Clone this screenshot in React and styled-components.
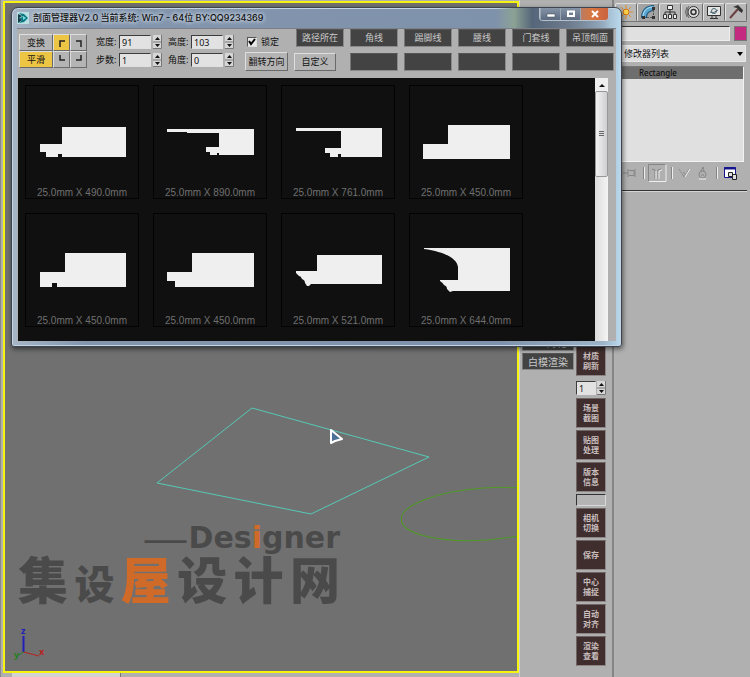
import React, { useState } from "react";
import styled, { createGlobalStyle, css } from "styled-components";

const GlobalStyle = createGlobalStyle`
  * {
    box-sizing: border-box;
  }
  body {
    margin: 0;
    background: #b0b0b0;
    color: #111;
    font-family: "Noto Sans", "Noto Sans CJK SC", sans-serif;
    font-size: 9px;
    line-height: 12px;
  }
  button, input, select {
    margin: 0;
    padding: 0;
    border-radius: 0;
    font: inherit;
    color: inherit;
  }
`;

const Workspace = styled.div`
  position: relative;
  display: grid;
  grid-template-columns: minmax(0, 1fr) 93px 138px;
  min-height: 100vh;
  overflow: hidden;
`;

/* ---------- viewport ---------- */

const ViewportColumn = styled.main`
  display: flex;
  flex-direction: column;
  padding: 1px 0 0 2px;
  border-left: 1px solid #8a8a8a;
`;

const Viewport = styled.section`
  position: relative;
  flex: 1;
  overflow: hidden;
  background: #707070;
  border: 2px solid #f7f310;
`;

const StatusStrip = styled.div`
  width: 118px;
  height: 4px;
  background: #d2d2d2;
  border-left: 9px solid #b0b0b0;
  border-right: 1px solid #777;
`;

const Scene = styled.svg`
  position: absolute;
  top: 0;
  left: 0;
  width: 514px;
  height: 100%;
`;

const Watermark = styled.div`
  position: absolute;
  left: 13px;
  bottom: 64px;
  width: 322px;
  color: #4a4a4a;
  font-weight: 900;
  white-space: nowrap;
`;

const WatermarkTop = styled.div`
  display: flex;
  align-items: center;
  justify-content: flex-end;
  gap: 2px;
  line-height: 28px;
  font-family: "DejaVu Sans", sans-serif;
  font-size: 30px;
`;

const Dash = styled.span`
  font-family: "Liberation Sans", sans-serif;
  font-size: 42px;
  font-weight: 400;
`;

const WatermarkName = styled.div`
  display: flex;
  align-items: baseline;
  justify-content: space-between;
  font-family: "Noto Sans CJK SC", sans-serif;
  font-size: 50px;
  line-height: 50px;
`;

const SmallGlyph = styled.span`
  font-size: 40px;
`;

const Accent = styled.span`
  color: #d06a28;
`;

const AxisTripod = styled.svg`
  position: absolute;
  left: 6px;
  bottom: 8px;
  width: 36px;
  height: 40px;
  font-size: 9px;
  font-weight: 700;
`;

/* ---------- dialog ---------- */

const Dialog = styled.section`
  position: absolute;
  top: 7px;
  left: 11px;
  right: 128px;
  display: flex;
  flex-direction: column;
  padding: 0 5px 5px;
  border: 1px solid #3d4650;
  border-radius: 7px 7px 3px 3px;
  background: linear-gradient(90deg, #a8b6c6 0, #8496ae 12%, #7f92ab 80%, #9db4c8 97%, #b9d9ec 100%);
  box-shadow: inset 0 0 0 1px #c3d3e2, 1px 2px 5px rgba(0, 0, 0, 0.55);
`;

const TitleBar = styled.header`
  display: flex;
  align-items: center;
  gap: 4px;
  height: 20px;
  background: linear-gradient(90deg, transparent 80%, #8ba194 83%, #56667a 86%, #6c7a8c 92%, transparent 99%);
`;

const Title = styled.h1`
  flex: 1;
  margin: 0;
  font-family: Inter, "Noto Sans CJK SC", sans-serif;
  font-size: 9px;
  font-weight: 500;
  text-shadow: 0 0 4px #d8e2ec, 0 0 4px #d8e2ec;
`;

const WindowButtons = styled.div`
  display: flex;
  align-self: flex-start;
  margin-right: 7px;
  border: 1px solid #b4c0cc;
  border-top: 0;
  border-radius: 0 0 4px 4px;
  overflow: hidden;
`;

const WindowButton = styled.button`
  display: grid;
  place-items: center;
  width: ${(p) => (p.$close ? 28 : 20)}px;
  height: 12px;
  border: 0;
  border-left: 1px solid #9aa8b6;
  background: ${(p) =>
    p.$close
      ? "linear-gradient(90deg, #b97c62, #d9763f 40%, #c9643f)"
      : "linear-gradient(#8493a5, #5c6b80)"};
`;

const Toolbar = styled.div`
  display: flex;
  align-items: flex-start;
  height: 50px;
  padding: 0 2px;
  background: #b0b0b0;
  border-top: 1px solid #7b8086;
`;

const ToggleGroup = styled.div`
  display: grid;
  grid-template-columns: 34px 17px 17px;
  grid-template-rows: 17px 17px;
  margin-top: 5px;
`;

const raised = css`
  border: 1px solid;
  border-color: #dedede #6a6a6a #6a6a6a #dedede;
`;

const PlainButton = styled.button`
  ${raised}
  display: grid;
  place-items: center;
  white-space: nowrap;
  background: ${(p) => (p.$on ? "#edc545" : "#b4b4b4")};
`;

const Fields = styled.div`
  display: grid;
  grid-template-columns: auto auto;
  gap: 4px 6px;
  margin: 6px 0 0 9px;
`;

const Field = styled.label`
  display: flex;
  align-items: center;
  gap: 2px;
  height: 14px;
`;

const FieldName = styled.span`
  width: 21px;
  white-space: nowrap;
`;

const NumberInput = styled.input`
  width: ${(p) => p.$width || 32}px;
  height: 14px;
  padding: 0 2px;
  background: #e2e2e2;
  border: 1px solid;
  border-color: #3c3c3c #e0e0e0 #e0e0e0 #3c3c3c;
  font-size: 9px;
`;

const Spinner = styled.svg`
  width: 9px;
  height: 14px;
  background: #d6d6d6;
`;

const LockColumn = styled.div`
  display: flex;
  flex-direction: column;
  gap: 3px;
  margin: 6px 0 0 11px;
`;

const LockLabel = styled.label`
  display: flex;
  align-items: center;
  gap: 4px;
  height: 14px;
`;

const CheckBox = styled.input`
  appearance: none;
  width: 10px;
  height: 10px;
  margin-left: 2px;
  border: 1px solid;
  border-color: #555 #ddd #ddd #555;
  background: #e8e8e8;
  &:checked {
    background: #e8e8e8
      url("data:image/svg+xml,%3Csvg xmlns='http://www.w3.org/2000/svg' viewBox='0 0 8 8'%3E%3Cpath d='M1 3l2 3 4-5' fill='none' stroke='%23000' stroke-width='2'/%3E%3C/svg%3E")
      center / 8px 8px no-repeat;
  }
`;

const WideButton = styled(PlainButton)`
  width: 43px;
  height: 19px;
`;

const Categories = styled.div`
  display: grid;
  grid-template-columns: repeat(6, 48px);
  grid-template-rows: 18px 18px;
  gap: 6px;
  margin-left: auto;
`;

const CategoryButton = styled.button`
  display: grid;
  place-items: center;
  overflow: hidden;
  white-space: nowrap;
  color: #c8c8c8;
  background: #434343;
  border: 1px solid;
  border-color: #555 #8a8a8a #8a8a8a #777;
`;

const CustomButton = styled(PlainButton)`
  margin: 0 8px 0 -2px;
`;

const Body = styled.div`
  display: flex;
  height: 263px;
  padding: 0 8px 0 1px;
  background: #b0b0b0;
`;

const Gallery = styled.ul`
  flex: 1;
  display: grid;
  grid-template-columns: repeat(auto-fill, 114px);
  align-content: start;
  gap: 14px;
  margin: 0;
  padding: 7px 0 0 7px;
  overflow: hidden;
  list-style: none;
  background: #101010;
`;

const Card = styled.li`
  display: flex;
  flex-direction: column;
  align-items: center;
  height: 114px;
  border: 1px solid #030303;
  color: #6f6f6f;
  font-family: "Liberation Sans", sans-serif;
  font-size: 10px;
`;

const Profile = styled.svg`
  width: 112px;
  height: 101px;
  flex: none;
  fill: #efefef;
`;

const Scrollbar = styled.div`
  display: flex;
  flex-direction: column;
  width: 13px;
  background: linear-gradient(90deg, #dcdcdc, #f4f4f4);
`;

const ScrollArrow = styled.button`
  display: grid;
  place-items: center;
  height: 13px;
  border: 0;
  background: #efefef;
`;

const ScrollThumb = styled.div`
  display: grid;
  place-items: center;
  height: 86px;
  border: 1px solid #999;
  border-radius: 2px;
  background: linear-gradient(90deg, #f2f2f2, #cfcfd2);
`;

/* ---------- tool dock ---------- */

const Dock = styled.aside`
  display: grid;
  grid-template-columns: 52px 30px;
  gap: 2px;
  align-content: start;
  align-items: start;
  padding: 334px 0 10px 2px;
  border-left: 1px solid #d0d0d0;
`;

const DockColumn = styled.div`
  display: flex;
  flex-direction: column;
  gap: 2px;
  padding-top: ${(p) => p.$top || 0}px;
`;

const DarkButton = styled(CategoryButton)`
  height: 17px;
  font-size: 10px;
`;

const BrownButton = styled.button`
  display: grid;
  place-items: center;
  height: 30px;
  padding: 0 6px;
  color: #c8bebe;
  background: #402e2e;
  border: 1px solid;
  border-color: #6f6464 #8d8585 #8d8585 #6f6464;
  font-family: "Noto Sans CJK SC", sans-serif;
  font-size: 8px;
  font-weight: 700;
  line-height: 10px;
`;

const DockSpinner = styled.div`
  display: flex;
  gap: 1px;
  height: 18px;
  padding-top: 3px;
`;

const ProgressSlot = styled.div`
  height: 12px;
  background: #b4b4b4;
  border: 1px solid;
  border-color: #333 #d8d8d8 #d8d8d8 #333;
`;

/* ---------- command panel ---------- */

const CommandPanel = styled.aside`
  display: flex;
  flex-direction: column;
  padding: 3px 3px 0 1px;
  border-left: 2px solid #858585;
`;

const Tabs = styled.nav`
  display: grid;
  grid-template-columns: repeat(6, 22px);
  height: 19px;
  border-bottom: 1px solid #777;
`;

const Tab = styled.button`
  display: grid;
  place-items: center;
  border: 1px solid;
  border-color: #e2e2e2 #6c6c6c transparent #e2e2e2;
  border-radius: 2px 2px 0 0;
  background: ${(p) => (p.$on ? "#a3a3a3" : "#b8b8b8")};
`;

const NameRow = styled.div`
  display: flex;
  gap: 4px;
  margin-top: 4px;
`;

const NameInput = styled.input`
  flex: 1;
  min-width: 0;
  height: 15px;
  background: #e0e0e0;
  border: 1px solid;
  border-color: #333 #eee #eee #333;
`;

const Swatch = styled.button`
  width: 13px;
  height: 15px;
  background: #c42a80;
  border: 1px solid #777;
`;

const ModifierSelect = styled.select`
  appearance: none;
  height: 17px;
  margin: 4px 1px 0 0;
  padding-left: 8px;
  border: 1px solid #e8e8e8;
  background: #dedede
    url("data:image/svg+xml,%3Csvg xmlns='http://www.w3.org/2000/svg' viewBox='0 0 6 4'%3E%3Cpath d='M0 0h6L3 4z'/%3E%3C/svg%3E")
    right 2px center / 6px 4px no-repeat;
`;

const Stack = styled.ul`
  height: 96px;
  margin: 4px 3px 0 0;
  padding: 0;
  list-style: none;
  background: #e0e0e0;
  border: 1px solid;
  border-color: #777 #f2f2f2 #f2f2f2 #777;
`;

const StackRow = styled.li`
  padding-left: 23px;
  background: #6e6e6e;
  font-size: 8px;
  font-weight: 500;
`;

const StackTools = styled.div`
  display: flex;
  align-items: flex-start;
  height: 29px;
  padding: 1px 0 0 2px;
  border-bottom: 1px solid #333;
  box-shadow: 0 1px #d6d6d6;
`;

const Icon = ({ w = 16, h = 16, children, ...rest }) => (
  <svg width={w} height={h} viewBox={`0 0 ${w} ${h}`} fill="none" aria-hidden="true" {...rest}>
    {children}
  </svg>
);

const MaxLogo = () => (
  <Icon w={12} h={12}>
    <path d="M0 0h12v12H0z" fill="#b8dfe2" />
    <path d="M2 1l5 1 4 4-4 4-5 1 3-3-3-2 4-1z" fill="#087984" />
    <path d="M1 2l4 2-3 2 3 2-4 3z" fill="#123e48" />
    <path d="M6 4l3 2-3 2z" fill="#7fe0df" />
  </Icon>
);

const Arrows = () => (
  <Spinner viewBox="0 0 9 14" aria-hidden="true">
    <path d="M0 13.5H8.5V0M0 7H8" fill="none" stroke="#777" />
    <path d="M2 5l2.5-3L7 5zM2 9h5l-2.5 3z" fill="#111" />
  </Spinner>
);

const NumberField = ({ name, value }) => (
  <Field>
    <FieldName>{name}:</FieldName>
    <NumberInput defaultValue={value} />
    <Arrows />
  </Field>
);

const corners = [
  { id: "tl", d: "M5 11V5h5" },
  { id: "tr", d: "M4 5h5v6" },
  { id: "bl", d: "M5 2v5h5" },
  { id: "br", d: "M9 2v5H4" },
];

const categories = ["路径所在", "角线", "踢脚线", "腰线", "门套线", "吊顶刨面"];

const profiles = [
  { size: 490, d: "M15 59H37V42H101V72H37V69H33V72H21V67H15Z" },
  { size: 890, d: "M14 44H101V70H66V68H64V70H57V67H53V62H66V48H34V47H14Z" },
  { size: 761, d: "M15 43H101V72H60V69H57V72H49V68H44V63H60V46H15Z" },
  { size: 450, d: "M14 59H39V40H101V74H14Z" },
  { size: 450, d: "M15 59H40V40H101V74H32V70H27V74H15Z" },
  { size: 450, d: "M14 59H39V40H101V74H22V68H14Z" },
  { size: 521, d: "M15 58H36V42H101V71H30L28 73H26L24 70Q24 67 21 66Q20 63 18 63L15 60Z" },
  { size: 644, d: "M15 35H101V78H44L41 79L38 76Q38 73 35 72Q34 70 31 68V67H49V54C48 46 37 39 15 36Z" },
];

const dockTop = ["材质刷新"];
const dockMiddle = ["场景截图", "贴图处理", "版本信息"];
const dockBottom = ["相机切换", "保存", "中心捕捉", "自动对齐", "渲染查看"];

const DockButtons = ({ items }) => items.map((name) => <BrownButton key={name}>{name}</BrownButton>);

function ProfileDialog() {
  const [corner, setCorner] = useState("tl");
  const [smooth, setSmooth] = useState(true);

  const cornerButton = (c) => (
    <PlainButton key={c.id} aria-label={c.id} $on={corner === c.id} onClick={() => setCorner(c.id)}>
      <Icon w={14} h={14}>
        <path d={c.d} stroke="#222" strokeWidth="1.5" />
      </Icon>
    </PlainButton>
  );

  return (
    <Dialog>
      <TitleBar>
        <MaxLogo />
        <Title>剖面管理器V2.0 当前系统: Win7 - 64位 BY:QQ9234369</Title>
        <WindowButtons>
          <WindowButton aria-label="minimize">
            <Icon w={12} h={8}><path d="M2 4h8v3H2z" fill="#fff" stroke="#3b4654" strokeWidth=".5" /></Icon>
          </WindowButton>
          <WindowButton aria-label="maximize">
            <Icon w={12} h={8}><path d="M3 1.5h6v4.5H3z" stroke="#fff" strokeWidth="2" /></Icon>
          </WindowButton>
          <WindowButton $close aria-label="close">
            <Icon w={12} h={8}><path d="M3 1l6 6M9 1L3 7" stroke="#fff" strokeWidth="2" /></Icon>
          </WindowButton>
        </WindowButtons>
      </TitleBar>

      <Toolbar>
        <ToggleGroup>
          <PlainButton $on={!smooth} onClick={() => setSmooth(false)}>变换</PlainButton>
          {corners.slice(0, 2).map(cornerButton)}
          <PlainButton $on={smooth} onClick={() => setSmooth(true)}>平滑</PlainButton>
          {corners.slice(2).map(cornerButton)}
        </ToggleGroup>

        <Fields>
          <NumberField name="宽度" value="91" />
          <NumberField name="高度" value="103" />
          <NumberField name="步数" value="1" />
          <NumberField name="角度" value="0" />
        </Fields>

        <LockColumn>
          <LockLabel>
            <CheckBox type="checkbox" defaultChecked />
            锁定
          </LockLabel>
          <WideButton>翻转方向</WideButton>
        </LockColumn>

        <Categories>
          {categories.map((c) => <CategoryButton key={c}>{c}</CategoryButton>)}
          <CustomButton>自定义</CustomButton>
          {categories.slice(1).map((c) => <CategoryButton key={c} aria-label="empty" />)}
        </Categories>
      </Toolbar>

      <Body>
        <Gallery>
          {profiles.map((p, i) => (
            <Card key={i}>
              <Profile viewBox="1 1 112 101" shapeRendering={i < 6 ? "crispEdges" : "auto"}>
                <path d={p.d} />
              </Profile>
              25.0mm X {p.size}.0mm
            </Card>
          ))}
        </Gallery>
        <Scrollbar>
          <ScrollArrow aria-label="scroll up">
            <Icon w={6} h={4}><path d="M0 4l3-3 3 3z" fill="#111" /></Icon>
          </ScrollArrow>
          <ScrollThumb>
            <Icon w={5} h={6}><path d="M0 .5h5M0 2.5h5M0 4.5h5" stroke="#666" /></Icon>
          </ScrollThumb>
        </Scrollbar>
      </Body>
    </Dialog>
  );
}

function MainViewport() {
  return (
    <ViewportColumn>
      <Viewport>
        <Scene aria-hidden="true">
          {/* rectangle spline */}
          <path d="M152 480L247 405L424 454L306 511Z" fill="none" stroke="#55c9b4" />
          {/* circle spline, runs past the right edge */}
          <ellipse cx="480" cy="511" rx="84" ry="26" transform="rotate(-4 480 511)" fill="none" stroke="#4f9a26" />
          <path d="M326 427V440L330 438L337 436Z" fill="#4d7196" stroke="#fff" strokeWidth="2" strokeLinejoin="round" />
        </Scene>
        <Watermark>
          <WatermarkTop>
            <Dash>—</Dash>
            <span>Des<Accent>i</Accent>gner</span>
          </WatermarkTop>
          <WatermarkName>
            <span>集</span>
            <SmallGlyph>设</SmallGlyph>
            <Accent>屋</Accent>
            <span>设</span>
            <span>计</span>
            <span>网</span>
          </WatermarkName>
        </Watermark>
        <AxisTripod viewBox="0 0 36 40">
          <path d="M12.5 13V29" stroke="#2020b8" strokeWidth="2" />
          <path d="M12.5 29L28 33" stroke="#b82020" />
          <path d="M12.5 29L8 32" stroke="#208020" />
          <text x="10" y="11" fill="#2020b8">z</text>
          <text x="28" y="32" fill="#b82020">x</text>
          <text x="3" y="35" fill="#208020">y</text>
        </AxisTripod>
      </Viewport>
      <StatusStrip />
    </ViewportColumn>
  );
}

function ToolDock() {
  return (
    <Dock>
      <DockColumn>
        <DarkButton>Box对化</DarkButton>
        <DarkButton>白模渲染</DarkButton>
      </DockColumn>
      <DockColumn $top={12}>
        <DockButtons items={dockTop} />
        <DockSpinner>
          <NumberInput $width={20} defaultValue="1" aria-label="编号" />
          <Arrows />
        </DockSpinner>
        <DockButtons items={dockMiddle} />
        <ProgressSlot />
        <DockButtons items={dockBottom} />
      </DockColumn>
    </Dock>
  );
}

const tabIcons = [
  <g key="create">
    <circle cx="8" cy="8" r="3" fill="#ffd24a" stroke="#d07010" />
    <path d="M8 1v3M8 12v3M1 8h3M12 8h3M3 3l2 2M11 11l2 2M13 3l-2 2M5 11l-2 2" stroke="#e08a20" />
  </g>,
  <g key="modify">
    <path d="M4 14C4 8 7 4 14 4" stroke="#1f5274" strokeWidth="6" />
    <path d="M4 14C4 8 7 4 14 4" stroke="#5aa6d2" strokeWidth="4" />
    <path d="M3 13C3 7 7 3 13 3" stroke="#b5def2" />
    <path d="M4 13.5h9.5V5" stroke="#555" strokeDasharray="2 1" />
    <path d="M2 12h3v3H2zM12 12h3v3h-3zM12 3h3v3h-3z" fill="#333" />
  </g>,
  <g key="hierarchy">
    <path d="M5.5 1.5h5v4h-5zM1.5 10.5h3v4h-3zM6.5 10.5h3v4h-3zM11.5 10.5h3v4h-3z" fill="#eee" stroke="#333" />
    <path d="M8 6v4M3 10V8h10v2" stroke="#333" />
  </g>,
  <g key="motion">
    <circle cx="9.5" cy="8" r="5.5" fill="#ddd" stroke="#333" />
    <circle cx="9.5" cy="8" r="2.5" stroke="#333" strokeWidth="1.5" />
    <path d="M3 3Q0 8 3 13M5 2Q1 8 5 14" stroke="#666" />
  </g>,
  <g key="display">
    <path d="M1.5 2.5h13v9h-13z" fill="#e6e6e6" stroke="#333" />
    <path d="M6 12v2M10 12v2M4 14.5h8" stroke="#333" />
    <circle cx="8" cy="7" r="2.5" stroke="#4a6670" />
    <path d="M4 8l3 1 5-3" stroke="#4a6670" />
  </g>,
  <g key="utilities">
    <path d="M2 14L10 5" stroke="#6a4040" strokeWidth="2" />
    <path d="M5 3l5-2 5 5-1 3-3-2-2-3z" fill="#333" />
  </g>,
];

function ModifyPanel() {
  const [tab, setTab] = useState(1);

  return (
    <CommandPanel>
      <Tabs>
        {tabIcons.map((icon, i) => (
          <Tab key={i} $on={tab === i} onClick={() => setTab(i)} aria-label={icon.key}>
            <Icon>{icon}</Icon>
          </Tab>
        ))}
      </Tabs>
      <NameRow>
        <NameInput aria-label="名称" />
        <Swatch aria-label="颜色" />
      </NameRow>
      <ModifierSelect aria-label="修改器">
        <option>修改器列表</option>
      </ModifierSelect>
      <Stack>
        <StackRow>Rectangle</StackRow>
      </Stack>
      <StackTools>
        <Icon w={128} h={20}>
          <g stroke="#858585">
            <path d="M6 10h5M11 6v8M12 7.5h5v5h-5M18 6v8" />
            <path d="M26.5 4v12M54.5 4v12M99.5 4v12" />
            <path d="M31.5 18V1.5h17" />
            <path d="M35 6l3 1v9M44 6l-3 1v9" />
            <path d="M62 6l5 8 5-8M67 9v6" strokeDasharray="2 1" />
            <circle cx="85.5" cy="11.5" r="3.5" />
            <path d="M84 8l2-4 1 4M84 12h3" />
          </g>
          <g stroke="#eee">
            <path d="M27.5 4v12M55.5 4v12M100.5 4v12M32 18.5h17v-17" />
            <path d="M39 8v8M45 7l-3 1v8M73 6l-5 8M82 16h7" />
          </g>
          <path d="M107.5 4.5h11v10h-11z" fill="#fff" stroke="#15158c" />
          <path d="M107 5.5h12" stroke="#15158c" strokeWidth="2" />
          <path d="M111.5 9.5h4v4h-4zM115.5 11.5h4v5h-4z" fill="#ddd" stroke="#222" />
        </Icon>
      </StackTools>
    </CommandPanel>
  );
}

export default function App() {
  return (
    <>
      <GlobalStyle />
      <Workspace>
        <MainViewport />
        <ToolDock />
        <ModifyPanel />
        <ProfileDialog />
      </Workspace>
    </>
  );
}
